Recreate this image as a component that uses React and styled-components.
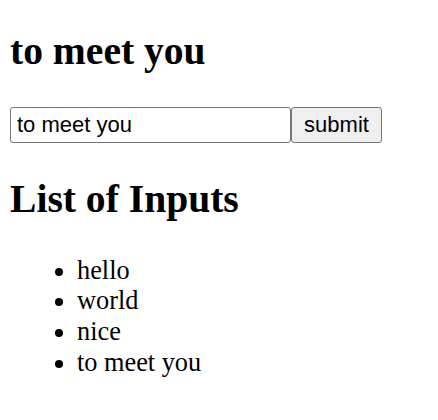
import React, { useState } from 'react'
import styled, { createGlobalStyle } from 'styled-components';

const GlobalStyle = createGlobalStyle`
  body {
    margin: 0;
    background: #fff;
    color: #000;
    font-family: "Liberation Serif", "Times New Roman", serif;
  }
`;

const Page = styled.div`
  padding: 1px 10px 0 10px;
`;

const Heading = styled.h1`
  font-size: 39.6px;
  line-height: 46px;
  font-weight: 700;
  margin: 26.5px 0 33px 0;
`;

const Form = styled.form`
  display: flex;
  align-items: stretch;
`;

const TextInput = styled.input`
  box-sizing: border-box;
  width: 281px;
  height: 36px;
  padding: 0 6px;
  font-family: "Liberation Sans", Arial, sans-serif;
  font-size: 22px;
  color: #000;
  border: 1px solid #767676;
  border-radius: 3px;
  background: #fff;
  outline: none;
`;

const SubmitButton = styled.button`
  box-sizing: border-box;
  width: 91px;
  height: 36px;
  padding: 0;
  font-family: "Liberation Sans", Arial, sans-serif;
  font-size: 22px;
  color: #000;
  background: #efefef;
  border: 1px solid #767676;
  border-radius: 3px;
`;

const SubHeading = styled.h2`
  font-size: 39.6px;
  line-height: 46px;
  font-weight: 700;
  margin: 33px 0 34px 0;
`;

const List = styled.ul`
  margin: 0;
  padding-left: 67px;
  font-size: 26.3px;
  line-height: 30.7px;
`;

const Item = styled.li``;

const App = () => {
  const [value, setValue] = useState('to meet you')
  const inputs = ['hello', 'world', 'nice', 'to meet you']
  return (
    <>
      <GlobalStyle />
      <Page>
        <Heading>{inputs[inputs.length - 1]}</Heading>
        <Form onSubmit={e => e.preventDefault()}>
          <TextInput value={value} onChange={e => setValue(e.target.value)} />
          <SubmitButton type="submit">submit</SubmitButton>
        </Form>
        <SubHeading>List of Inputs</SubHeading>
        <List>
          {inputs.map((input, index) => (
            <Item key={index}>{input}</Item>
          ))}
        </List>
      </Page>
    </>
  )
}

export default App
